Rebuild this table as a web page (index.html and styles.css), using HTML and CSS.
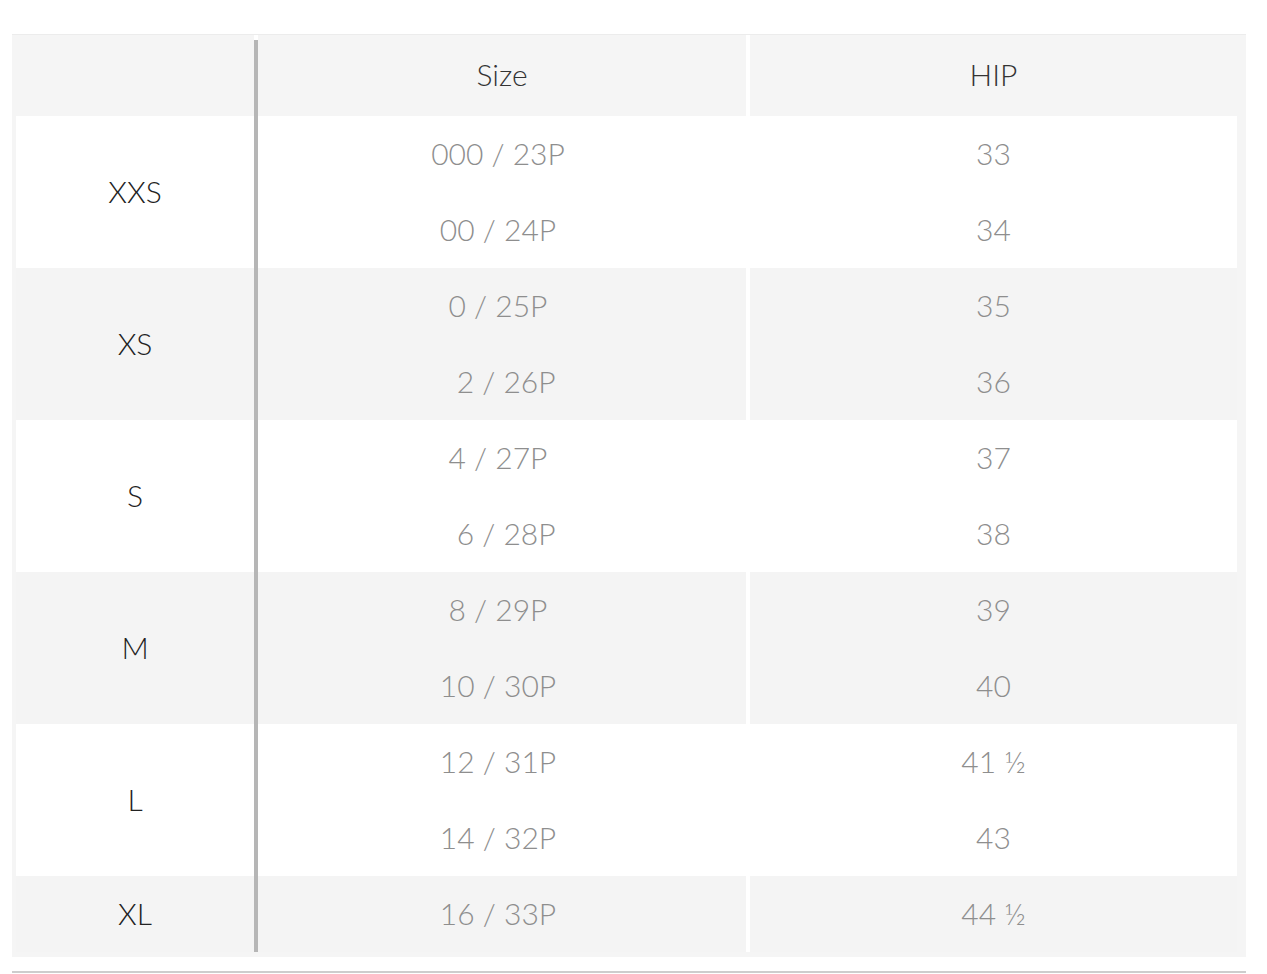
FILE: index.html
```html
<!DOCTYPE html>
<html lang="en">
<head>
<meta charset="utf-8">
<title>Size chart</title>
<link rel="stylesheet" href="styles.css">
</head>
<body>
<div class="sheet">
  <div class="grid">
    <div class="vline"></div>
    <div class="cell head first"></div>
    <div class="cell head c2">Size</div>
    <div class="cell head c3">HIP</div>

    <div class="cell lab span2">XXS</div>
    <div class="cell val c2">000 / 23P</div>
    <div class="cell val c3">33</div>
    <div class="cell val c2">00 / 24P</div>
    <div class="cell val c3">34</div>

    <div class="cell lab span2 g">XS</div>
    <div class="cell val c2 g">0 / 25P</div>
    <div class="cell val c3 g">35</div>
    <div class="cell val c2 g">&nbsp;&nbsp;2 / 26P</div>
    <div class="cell val c3 g">36</div>

    <div class="cell lab span2">S</div>
    <div class="cell val c2">4 / 27P</div>
    <div class="cell val c3">37</div>
    <div class="cell val c2">&nbsp;&nbsp;6 / 28P</div>
    <div class="cell val c3">38</div>

    <div class="cell lab span2 g">M</div>
    <div class="cell val c2 g">8 / 29P</div>
    <div class="cell val c3 g">39</div>
    <div class="cell val c2 g">10 / 30P</div>
    <div class="cell val c3 g">40</div>

    <div class="cell lab span2">L</div>
    <div class="cell val c2">12 / 31P</div>
    <div class="cell val c3">41 ½</div>
    <div class="cell val c2">14 / 32P</div>
    <div class="cell val c3">43</div>

    <div class="cell lab g">XL</div>
    <div class="cell val c2 g">16 / 33P</div>
    <div class="cell val c3 g">44 ½</div>
  </div>
</div>
<div class="rule"></div>
</body>
</html>
```

FILE: styles.css
```css
html, body {
  margin: 0;
  padding: 0;
  background: #ffffff;
}

body {
  font-family: "Lato", "Liberation Sans", sans-serif;
}

.sheet {
  box-sizing: border-box;
  width: 1234px;
  margin: 34px 0 0 12px;
  padding: 0 9px 5px 4px;
  background: #f5f5f5;
  border-top: 1px solid #ececec;
}

.grid {
  display: grid;
  grid-template-columns: 238px 4px 488px 4px 487px;
  grid-template-rows: 81px repeat(11, 76px);
  background: #ffffff;
}

.vline {
  grid-column: 2;
  grid-row: 1 / -1;
  margin-top: 5px;
  background: #b6b6b6;
}

.cell {
  display: flex;
  align-items: center;
  justify-content: center;
  padding-bottom: 3px;
  font-size: 30px;
  line-height: 1;
}

.head {
  background: #f5f5f5;
  color: #333333;
  font-weight: 300;
}

.head.first {
  grid-column: 1;
  margin-left: -4px;
}

.c2 {
  grid-column: 3;
}

.c3 {
  grid-column: 5;
}

.lab {
  grid-column: 1;
  color: #222222;
  font-weight: 300;
}

.span2 {
  grid-row: span 2;
}

.val {
  color: #8e8e8e;
  font-weight: 300;
}

.val.c2 {
  padding-right: 8px;
}

.g {
  background: #f4f4f4;
}

.rule {
  width: 1234px;
  height: 2px;
  margin: 14px 0 0 12px;
  background: #cdcdcd;
}
```
